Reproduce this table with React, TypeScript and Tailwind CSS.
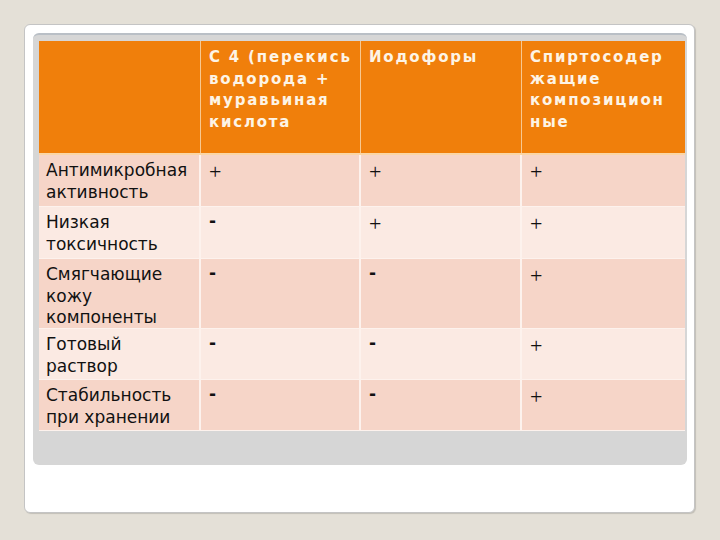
import React from "react";

const rows: { label: string; vals: string[]; h: string }[] = [
  { label: "Антимикробная активность", vals: ["+", "+", "+"], h: "h-[52px]" },
  { label: "Низкая токсичность", vals: ["-", "+", "+"], h: "h-[52px]" },
  { label: "Смягчающие кожу компоненты", vals: ["-", "-", "+"], h: "h-[70px]" },
  { label: "Готовый раствор", vals: ["-", "-", "+"], h: "h-[51px]" },
  { label: "Стабильность при хранении", vals: ["-", "-", "+"], h: "h-[51px]" },
];

const headers = [
  "С 4 (перекись водорода + муравьиная кислота",
  "Иодофоры",
  "Спиртосодер жащие композицион ные",
];

function Val({ v }: { v: string }) {
  if (v === "+")
    return (
      <span className="text-[22px] leading-[21.5px] font-light" style={{ fontFamily: '"Liberation Serif", serif' }}>
        +
      </span>
    );
  return <span className="font-bold text-[17px] leading-[21.5px] relative top-[-2px]">-</span>;
}

export default function App() {
  return (
    <div className="w-[720px] h-[540px] bg-[#e4e0d7] pt-[24px] pl-[24px]" style={{ fontFamily: '"DejaVu Sans", Verdana, sans-serif' }}>
      <div className="w-[671px] h-[489px] bg-white rounded-[6px] border border-[#c4c4c4] shadow-[1px_1px_1px_rgba(0,0,0,0.15)] pt-[8px] pl-[8px]">
        <div className="w-[654px] h-[432px] bg-[#d6d6d6] rounded-[6px] border-t-2 border-[#b9bfc6] pl-[6px] pt-[6px]">
          <div className="w-[646px] flex flex-col">
            <div className="flex h-[114px] bg-[#f07f0b] border-b-2 border-[#fbd6a6]">
              <div className="w-[162px] border-r border-[#f8c890]" />
              {headers.map((h, i) => (
                <div
                  key={i}
                  className={`${i === 0 ? "w-[160px]" : i === 1 ? "w-[161px]" : "w-[163px]"} ${i < 2 ? "border-r border-[#f8c890]" : ""} pl-[8px] pr-[2px] pt-[6px] text-[#fdf4e6] font-bold text-[15px] leading-[21.7px] tracking-[1.8px]`}
                >
                  {h}
                </div>
              ))}
            </div>
            {rows.map((r, ri) => (
              <div key={ri} className={`flex ${r.h} ${ri % 2 === 0 ? "bg-[#f6d5c8]" : "bg-[#fbeae3]"} border-b border-[#fdf2ed]`}>
                <div className="w-[162px] border-r-2 border-[#fdf2ed] pl-[7px] pr-[8px] pt-[5px] text-[17px] leading-[21.5px] text-[#111]">
                  {r.label}
                </div>
                {r.vals.map((v, vi) => (
                  <div
                    key={vi}
                    className={`${vi === 0 ? "w-[160px]" : vi === 1 ? "w-[161px]" : "w-[163px]"} ${vi < 2 ? "border-r-2 border-[#fdf2ed]" : ""} pl-[8px] pt-[6px] text-[#111] leading-[21.5px]`}
                  >
                    <Val v={v} />
                  </div>
                ))}
              </div>
            ))}
          </div>
        </div>
      </div>
    </div>
  );
}
